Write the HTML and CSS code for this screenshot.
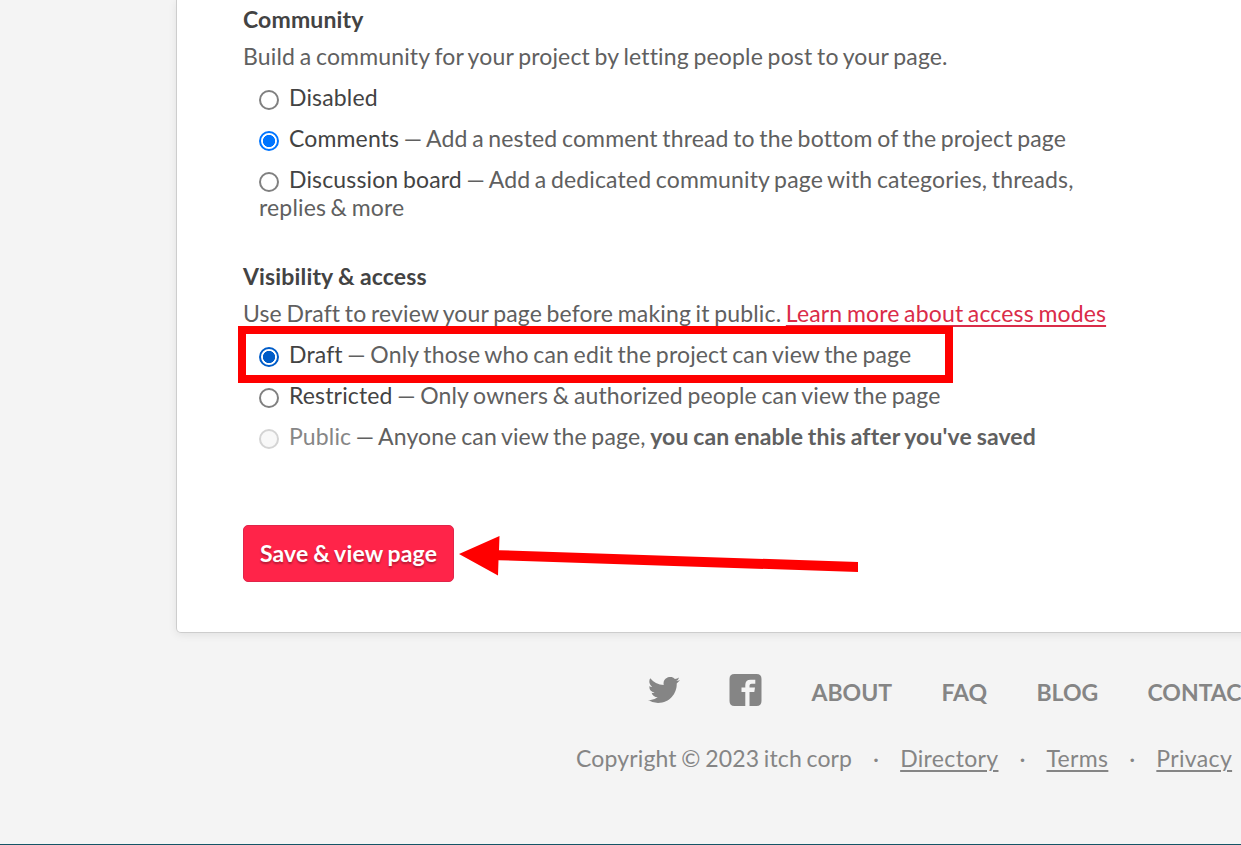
FILE: index.html
```html
<!DOCTYPE html>
<html lang="en">
<head>
<meta charset="utf-8">
<title>Edit project</title>
<link rel="stylesheet" href="styles.css">
</head>
<body>
<div class="page">
  <main class="card">
    <section class="group">
      <h2 class="label">Community</h2>
      <p class="sub sub-intro">Build a community for your project by letting people post to your page.</p>
      <ul class="options">
        <li><label><input class="radio" type="radio" name="community">Disabled</label></li>
        <li><label><input class="radio" type="radio" name="community" checked>Comments<span class="hint"> — Add a nested comment thread to the bottom of the project page</span></label></li>
        <li><label><input class="radio" type="radio" name="community">Discussion board<span class="hint"> — Add a dedicated community page with categories, threads, replies &amp; more</span></label></li>
      </ul>
    </section>
    <section class="group">
      <h2 class="label">Visibility &amp; access</h2>
      <p class="sub">Use Draft to review your page before making it public. <a class="link" href="#">Learn more about access modes</a></p>
      <ul class="options">
        <li class="marked"><label><input class="radio radio-hover" type="radio" name="access" checked>Draft<span class="hint"> — Only those who can edit the project can view the page</span></label><span class="mark-box"></span></li>
        <li><label><input class="radio" type="radio" name="access">Restricted<span class="hint"> — Only owners &amp; authorized people can view the page</span></label></li>
        <li><label><input class="radio" type="radio" name="access" disabled><span class="off">Public</span><span class="hint"> — Anyone can view the page, <b>you can enable this after you've saved</b></span></label></li>
      </ul>
    </section>
    <div class="actions">
      <button class="save">Save &amp; view page</button>
      <svg class="arrow" width="400" height="42" viewBox="0 0 400 42"><path fill="#f00" d="M1 19 41.500 1 41 15.200 400 27V37L40.500 25.200 40 40.500Z"/></svg>
    </div>
  </main>
  <footer class="footer">
    <nav class="nav">
      <svg class="twitter" width="32" height="26" viewBox="0 0 24 19.500"><path fill="#858585" d="M24 2.309a9.800 9.800 0 0 1-2.828.775 4.900 4.900 0 0 0 2.165-2.724 9.900 9.900 0 0 1-3.127 1.195A4.920 4.920 0 0 0 11.828 6.040 14 14 0 0 1 1.671.891 4.930 4.930 0 0 0 3.194 7.465a4.900 4.900 0 0 1-2.229-.616 4.920 4.920 0 0 0 3.946 4.890 4.900 4.900 0 0 1-2.224.084 4.930 4.930 0 0 0 4.600 3.419A9.900 9.900 0 0 1 0 17.280a13.900 13.900 0 0 0 7.548 2.212c9.142 0 14.307-7.721 13.995-14.646A10 10 0 0 0 24 2.309Z"/></svg>
      <svg class="facebook" width="33" height="32" viewBox="0 0 33 32"><path fill="#858585" fill-rule="evenodd" d="M5.500 0H27.500Q32.500 0 32.500 5V27Q32.500 32 27.500 32H20.500V17.900H25.300L26 13.500H20.500V11.500Q20.500 9.800 22.600 9.800H26.300V5.700H21.500Q16.300 5.700 16.300 11V13.500H12.500V17.900H16.300V32H5.500Q.5 32 .5 27V5Q.5 0 5.500 0Z"/></svg>
      <a href="#">ABOUT</a><a href="#">FAQ</a><a href="#">BLOG</a><a href="#">CONTACT US</a>
    </nav>
    <div class="legal">
      <span>Copyright © 2023 itch corp</span><span class="dot">·</span><a href="#">Directory</a><span class="dot">·</span><a href="#">Terms</a><span class="dot">·</span><a href="#">Privacy</a>
    </div>
  </footer>
</div>
</body>
</html>
```

FILE: styles.css
```css
* { box-sizing: border-box; }
body {
  margin: 0;
  background: #f4f4f4;
  color: #434343;
  font: 23px/28px Lato, sans-serif;
  letter-spacing: .15px;
  word-spacing: -1.45px;
  font-variant-ligatures: none;
  overflow: hidden;
}
.page {
  height: 845px;
  overflow: hidden;
  border-bottom: 1px solid #155466;
}
.card {
  width: 1120px;
  height: 633px;
  margin-left: 176px;
  padding: 5px 66px 0;
  background: #fff;
  border: 1px solid #cdcdcd;
  border-top: 0;
  border-radius: 0 0 5px 5px;
  box-shadow: 0 2px 8px rgba(0, 0, 0, .08);
}
.group { margin-bottom: 41px; width: 870px; }
.label { margin: 0 0 9px; font-size: 23px; font-weight: 700; word-spacing: -.6px; }
.sub { margin: 0 0 13px; color: #606060; white-space: nowrap; }
.sub-intro { word-spacing: -1.35px; }
.link { color: #da2c49; text-decoration: underline; text-decoration-thickness: 2px; text-underline-offset: 3px; text-decoration-skip-ink: none; }
.options {
  margin: 0;
  padding: 0 0 0 16px;
  list-style: none;
  display: grid;
  gap: 13px;
}
.hint { color: #606060; }
.hint b { word-spacing: -1px; }
.off { color: #868686; }
.radio {
  appearance: none;
  width: 20px;
  height: 20px;
  margin: 0 10px 0 0;
  vertical-align: -4px;
  border: 2px solid #808080;
  border-radius: 50%;
  background: #fff;
}
.radio:checked {
  border: 2px solid #0075ff;
  background: radial-gradient(circle, #0075ff 5.800px, #fff 6.400px);
}
.radio-hover:checked {
  border-color: #005cc8;
  background: radial-gradient(circle, #005cc8 5.800px, #fff 6.400px);
}
.radio:disabled { border-color: #d4d4d4; background: #f8f8f8; }
.marked { position: relative; }
.mark-box {
  position: absolute;
  left: -21px;
  top: -14px;
  width: 715px;
  height: 57px;
  border: 8px solid #f00;
}
.actions { display: flex; margin-top: 75px; gap: 4px; }
.save {
  width: 211px;
  height: 57px;
  padding: 0 0 2px;
  border: 1px solid #e0254a;
  border-radius: 5px;
  background: #ff2449;
  color: #fff;
  font: 700 23px/28px Lato, sans-serif;
  letter-spacing: .15px;
  word-spacing: -1px;
  text-shadow: 0 2px 2px rgba(0, 0, 0, .3);
}
.arrow { margin-top: 9.500px; flex: none; }
.footer { color: #858585; }
.footer a { color: #858585; }
.nav {
  display: flex;
  align-items: center;
  height: 34px;
  margin: 40px 0 0 648px;
  white-space: nowrap;
  font-weight: 700;
  letter-spacing: 0;
}
.nav a { text-decoration: none; margin-right: 49.300px; padding-top: 4px; }
.twitter { margin-right: 49px; flex: none; }
.facebook { margin-right: 49.500px; flex: none; }
.legal {
  display: flex;
  margin: 37px 0 0 576px;
  white-space: nowrap;
}
.legal a { text-decoration-thickness: 2px; text-underline-offset: 3px; letter-spacing: .34px; }
.dot { width: 48px; text-align: center; }
```
